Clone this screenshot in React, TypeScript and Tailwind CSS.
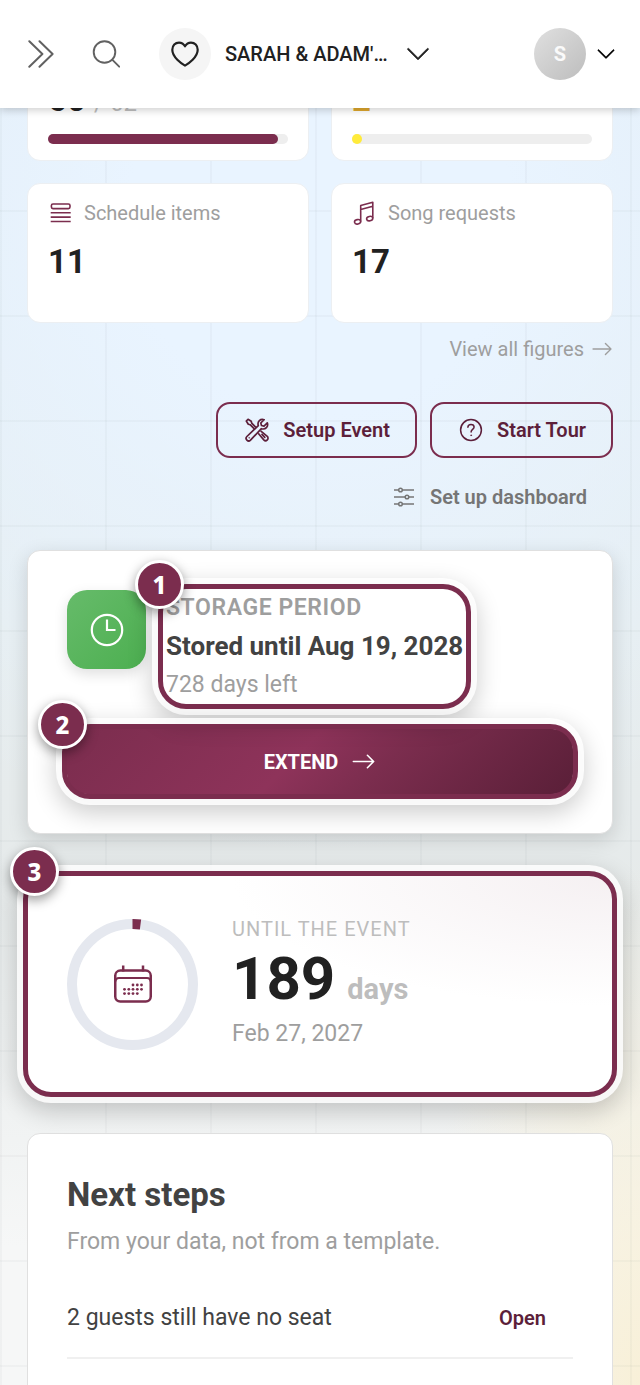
import type { ReactNode } from "react";
import { BsArrowRight, BsChevronDown } from "react-icons/bs";

type IconProperties = {
  className?: string;
};

const ExpandIcon = ({ className }: IconProperties) => {
  return (
    <svg
      className={className}
      fill="none"
      stroke="currentColor"
      strokeLinecap="round"
      strokeLinejoin="round"
      strokeWidth="2"
      viewBox="0 0 28 28"
    >
      <path d="M2.300 1.200 15.400 14 2.300 26.800M12.500 1.200 25.600 14 12.500 26.800" />
    </svg>
  );
};

const SearchIcon = ({ className }: IconProperties) => {
  return (
    <svg
      className={className}
      fill="none"
      stroke="currentColor"
      strokeLinecap="round"
      strokeWidth="1.9"
      viewBox="0 0 28 28"
    >
      <circle cx="12.500" cy="12" r="10.800" />
      <path d="m20.200 19.700 7 7" />
    </svg>
  );
};

const HeartIcon = ({ className }: IconProperties) => {
  return (
    <svg
      className={className}
      fill="none"
      stroke="currentColor"
      strokeLinejoin="round"
      strokeWidth="2.200"
      viewBox="0 0 28 28"
    >
      <path d="M14 25.600C10.500 23.600 1.300 17.300 1.300 9.800 1.300 5.500 4.300 2.600 8 2.600c2.600 0 4.600 1.300 6 3.700 1.400-2.400 3.400-3.700 6-3.700 3.700 0 6.700 2.900 6.700 7.200 0 7.500-9.200 13.800-12.700 15.800Z" />
    </svg>
  );
};

const ListIcon = ({ className }: IconProperties) => {
  return (
    <svg
      className={className}
      fill="none"
      stroke="currentColor"
      strokeWidth="1.6"
      viewBox="0 0 24 24"
    >
      <rect height="4.600" rx="1.6" width="18.600" x="3.400" y="3" />
      <path d="M2.700 11.800h20M2.700 16.100h20M2.700 20.500h20" />
    </svg>
  );
};

const MusicIcon = ({ className }: IconProperties) => {
  return (
    <svg
      className={className}
      fill="none"
      stroke="currentColor"
      strokeLinejoin="round"
      strokeWidth="1.6"
      viewBox="0 0 24 24"
    >
      <path d="M8.700 20.400V4.400L20.800 1.200v16M8.700 8.400l12.100-3.200" />
      <ellipse cx="5.600" cy="20.800" rx="3.1" ry="2.200" transform="rotate(-12 5.600 20.800)" />
      <ellipse cx="17.700" cy="17.600" rx="3.1" ry="2.200" transform="rotate(-12 17.700 17.600)" />
    </svg>
  );
};

const ToolsIcon = ({ className }: IconProperties) => {
  return (
    <svg
      className={className}
      fill="none"
      stroke="currentColor"
      strokeLinejoin="round"
      strokeWidth="1.7"
      viewBox="0 0 24 24"
    >
      <path d="m22.300 4.900-3.300 3.300-2.500-.7-.7-2.500 3.300-3.300C15.500.4 12 3.400 13.300 7.600L1.900 18.500a2.500 2.500 0 0 0 3.600 3.600L16.400 10.700c4.200 1.300 7.200-2.200 5.900-5.800Z" />
      <path d="M10.900 9.300 6.700 5.100l-.5-1.800L3 1.300 1.300 3l2 3.200 1.800.5 4.200 4.200" />
      <path d="m13.200 15.200 5.600 6.700a2.400 2.400 0 0 0 3.500-3.500l-6.700-5.600" />
      <path d="m17 16.400 2.800 2.900" strokeLinecap="round" />
      <circle cx="4.200" cy="19.800" fill="currentColor" r=".5" strokeWidth=".4" />
    </svg>
  );
};

const QuestionIcon = ({ className }: IconProperties) => {
  return (
    <svg
      className={className}
      fill="none"
      stroke="currentColor"
      strokeLinecap="round"
      strokeWidth="1.5"
      viewBox="0 0 24 24"
    >
      <circle cx="12" cy="12" r="10.400" />
      <path d="M8.900 9.300c0-1.700 1.300-2.900 3.100-2.900s3.100 1.100 3.100 2.700c0 2.300-3 2.400-3 4.900" />
      <circle cx="12.100" cy="17.300" fill="currentColor" r=".5" strokeWidth=".6" />
    </svg>
  );
};

const SlidersIcon = ({ className }: IconProperties) => {
  return (
    <svg
      className={className}
      fill="none"
      stroke="currentColor"
      strokeWidth="1.5"
      viewBox="0 0 24 24"
    >
      <path d="M2 5h5M10 5h12M2 12h11.500M16.500 12H22M2 19h5M10 19h12" />
      <circle cx="8.500" cy="5" r="1.8" />
      <circle cx="15" cy="12" r="1.8" />
      <circle cx="8.500" cy="19" r="1.8" />
    </svg>
  );
};

const ClockIcon = ({ className }: IconProperties) => {
  return (
    <svg
      className={className}
      fill="none"
      stroke="currentColor"
      strokeWidth="2.200"
      viewBox="0 0 34 34"
    >
      <circle cx="17" cy="17" r="15.200" />
      <path d="M17 6.500V17h8.500" />
    </svg>
  );
};

const calendarDots = [
  [19, 20],
  [23.3, 20],
  [27.5, 20],
  [10.5, 24.3],
  [14.8, 24.3],
  [19, 24.3],
  [23.3, 24.3],
  [27.5, 24.3],
  [10.5, 28.6],
  [14.8, 28.6],
  [19, 28.6],
  [23.3, 28.6],
];

const CalendarIcon = ({ className }: IconProperties) => {
  return (
    <svg
      className={className}
      fill="none"
      stroke="currentColor"
      strokeWidth="2.500"
      viewBox="0 0 38 38"
    >
      <path d="M9.200 .500v6M29 .500v6" />
      <rect height="31" rx="5" width="35.500" x="1.250" y="5.600" />
      <path d="M1.500 16.500c0-2.400 1.500-3.500 3.500-3.500h28c2 0 3.500 1.100 3.500 3.500" strokeWidth="2" />
      {calendarDots.map(([x, y]) => {
        return (
          <circle cx={x} cy={y} fill="currentColor" key={`${x}-${y}`} r="1.4" stroke="none" />
        );
      })}
    </svg>
  );
};

type StatCardProperties = {
  icon?: ReactNode;
  label?: string;
  value: ReactNode;
  progress?: ReactNode;
};

const StatCard = ({ icon, label, value, progress }: StatCardProperties) => {
  return (
    <div className="flex h-35 flex-col rounded-[13px] border border-[#eceff2] bg-white px-5 pt-[15px] pb-4">
      <div className="flex h-7 items-center gap-3 text-xl text-[#9e9e9e]">
        {icon}
        {label && <span>{label}</span>}
      </div>
      <div className="mt-[17px] text-[33px] leading-9 font-bold text-[#212121]">{value}</div>
      {progress && <div className="mt-auto">{progress}</div>}
    </div>
  );
};

type BadgeProperties = {
  className: string;
  children: ReactNode;
};

const Badge = ({ className, children }: BadgeProperties) => {
  return (
    <span
      className={`absolute z-20 flex size-[49px] items-center justify-center rounded-full border-3 border-white bg-[#7b2d4e] font-['Noto_Sans',sans-serif] text-2xl font-extrabold text-white shadow-[0_4px_12px_rgba(0,0,0,0.4)] ${className}`}
    >
      {children}
    </span>
  );
};

// Ring that marks a part of the page, with its white halo
const Highlight = ({ className }: IconProperties) => {
  return (
    <span
      className={`pointer-events-none absolute z-10 rounded-[28px] border-5 border-[#7b2d4e] shadow-[0_0_0_6px_rgba(255,255,255,0.85),0_8px_24px_6px_rgba(0,0,0,0.2)] ${className}`}
    />
  );
};

const Header = () => {
  return (
    <header className="relative z-30 flex h-27 shrink-0 items-center bg-white pr-6 pl-[27px] shadow-[0_2px_8px_rgba(0,0,0,0.2)]">
      <button aria-label="Expand menu" className="text-[#616161]" type="button">
        <ExpandIcon className="size-7" />
      </button>
      <button aria-label="Search" className="ml-[37px] text-[#616161]" type="button">
        <SearchIcon className="size-7" />
      </button>
      <button className="ml-[39px] flex items-center text-[#212121]" type="button">
        <span className="flex size-[52px] items-center justify-center rounded-full bg-[#f5f5f5]">
          <HeartIcon className="size-7" />
        </span>
        <span className="ml-[14px] text-xl font-medium">SARAH &amp; ADAM'…</span>
        <BsChevronDown className="ml-[17px] size-[26px] stroke-[0.3]" />
      </button>
      <button aria-label="Account" className="ml-auto flex items-center gap-2.5" type="button">
        <span className="flex size-[52px] items-center justify-center rounded-full bg-linear-to-br from-[#e0e0e0] to-[#bdbdbd] text-xl font-bold text-[#fafafa]">
          S
        </span>
        <BsChevronDown className="size-5 stroke-[0.4]" />
      </button>
    </header>
  );
};

const App = () => {
  return (
    <div className="flex h-screen flex-col overflow-hidden bg-[#f1f3f3] bg-[linear-gradient(90deg,rgba(80,90,100,0.04)_2px,transparent_2px),linear-gradient(rgba(80,90,100,0.04)_2px,transparent_2px),radial-gradient(ellipse_35%_38%_at_100%_100%,#f8f0d8,transparent),radial-gradient(ellipse_100%_46%_at_50%_16%,#e9f4ff_30%,transparent),linear-gradient(#dfebf6,#e6edef_45%,#e6eaea_65%,#f6f7f7_90%)] bg-size-[105px_105px,105px_105px,auto,auto,auto] font-[Roboto,sans-serif]">
      <Header />

      <main className="-mt-[87px] flex flex-col px-[27px]">
        <section className="grid grid-cols-2 gap-[22px]">
          <StatCard
            progress={
              <div className="h-2.5 rounded-full bg-[#eee]">
                <div className="h-full w-[96%] rounded-full bg-[#7b2d4e]" />
              </div>
            }
            value={
              <>
                60 <span className="text-2xl leading-none font-normal text-[#bdbdbd]">/ 62</span>
              </>
            }
          />
          <StatCard
            progress={
              <div className="h-2.5 rounded-full bg-[#eee]">
                <div className="size-2.5 rounded-full bg-[#ffeb3b]" />
              </div>
            }
            value={<span className="text-[#e0a82e]">2</span>}
          />
          <StatCard
            icon={<ListIcon className="size-6 text-[#7b2d4e]" />}
            label="Schedule items"
            value="11"
          />
          <StatCard
            icon={<MusicIcon className="size-6 text-[#7b2d4e]" />}
            label="Song requests"
            value="17"
          />
        </section>

        <a
          className="mt-2.5 flex items-center gap-[7px] self-end text-xl leading-8 text-[#9e9e9e]"
          href="#figures"
        >
          View all figures <BsArrowRight className="size-[22px]" />
        </a>

        <div className="mt-[37px] flex flex-wrap justify-end gap-x-[13px] gap-y-[11px] text-xl font-semibold">
          <button
            className="flex h-14 items-center gap-[14px] rounded-[14px] border-2 border-[#7b2d4e] pr-[25px] pl-[27px] text-[#5c1f3a]"
            type="button"
          >
            <ToolsIcon className="size-6" /> Setup Event
          </button>
          <button
            className="flex h-14 items-center gap-[14px] rounded-[14px] border-2 border-[#7b2d4e] pr-[25px] pl-[27px] text-[#5c1f3a]"
            type="button"
          >
            <QuestionIcon className="size-6" /> Start Tour
          </button>
          <button
            className="flex h-14 items-center gap-[14px] border-2 border-transparent pr-6 pl-[27px] text-[#757575]"
            type="button"
          >
            <SlidersIcon className="size-6" /> Set up dashboard
          </button>
        </div>

        <section className="mt-[25px] rounded-[13px] border border-[#e0e0e0] bg-white p-[39px] shadow-[0_6px_20px_rgba(0,0,0,0.14)]">
          <div className="flex gap-5">
            <div className="flex size-[79px] shrink-0 items-center justify-center rounded-[20px] bg-linear-to-br from-[#66bb6a] to-[#4caf50] text-white shadow-[0_5px_14px_rgba(0,0,0,0.13)]">
              <ClockIcon className="size-[34px]" />
            </div>
            <div className="relative">
              <Highlight className="-inset-x-2 -inset-y-[6px]" />
              <Badge className="-top-[30px] -left-[31px]">1</Badge>
              <p className="text-[23px] leading-9 font-semibold tracking-wide text-[#9e9e9e]">
                STORAGE PERIOD
              </p>
              <p className="text-[26px] leading-10 font-bold text-[#424242]">
                Stored until Aug 19, 2028
              </p>
              <p className="text-[23px] leading-[37px] text-[#9e9e9e]">728 days left</p>
            </div>
          </div>
          <div className="relative mt-[26px]">
            <Highlight className="-inset-[5px]" />
            <Badge className="-top-[29px] -left-[29px]">2</Badge>
            <button
              className="flex h-[65px] w-full items-center justify-center gap-[13px] rounded-[20px] bg-linear-[135deg,#7b2d4e,#8e335a_45%,#7b2d4e_62%,#5a1f38] text-xl font-bold text-white"
              type="button"
            >
              EXTEND <BsArrowRight className="size-[25px]" />
            </button>
          </div>
        </section>

        <section className="relative mt-[42px] flex items-center gap-[34px] rounded-[23px] bg-white bg-[radial-gradient(ellipse_65%_60%_at_100%_0%,#f5f0f2,transparent)] px-10 py-[41px]">
          <Highlight className="-inset-x-1 -inset-y-[5px]" />
          <Badge className="-top-[29px] -left-[17px]">3</Badge>
          <div className="relative flex size-[131px] shrink-0 items-center justify-center text-[#7b2d4e]">
            <svg className="absolute inset-0 size-full" fill="none" viewBox="0 0 131 131">
              <circle cx="65.500" cy="65.500" r="60.500" stroke="#e5e8ef" strokeWidth="10" />
              <path d="M65.500 5A60.500 60.500 0 0 1 73.500 5.500" stroke="currentColor" strokeWidth="10" />
            </svg>
            <CalendarIcon className="size-[38px]" />
          </div>
          <div>
            <p className="text-xl leading-6 tracking-wider text-[#bdbdbd]">UNTIL THE EVENT</p>
            <p className="flex h-[76px] items-baseline gap-3 text-[60px] leading-[76px] font-bold text-[#212121]">
              189 <span className="text-[29px] leading-none text-[#bdbdbd]">days</span>
            </p>
            <p className="text-[23px] leading-[34px] text-[#9e9e9e]">Feb 27, 2027</p>
          </div>
        </section>

        <section className="mt-[41px] rounded-[13px] border border-[#e0e0e0] bg-white p-[39px]">
          <h2 className="text-[33px] leading-11 font-bold text-[#424242]">Next steps</h2>
          <p className="mt-[7px] text-[23px] leading-9 text-[#9e9e9e]">
            From your data, not from a template.
          </p>
          <div className="mt-[19px] flex h-20 items-center justify-between border-b-2 border-[#f0f0f0] text-[23px] text-[#424242]">
            <span>2 guests still have no seat</span>
            <a className="px-[27px] text-xl font-semibold text-[#5c1f3a]" href="#seating">
              Open
            </a>
          </div>
        </section>
      </main>
    </div>
  );
};

export default App;
